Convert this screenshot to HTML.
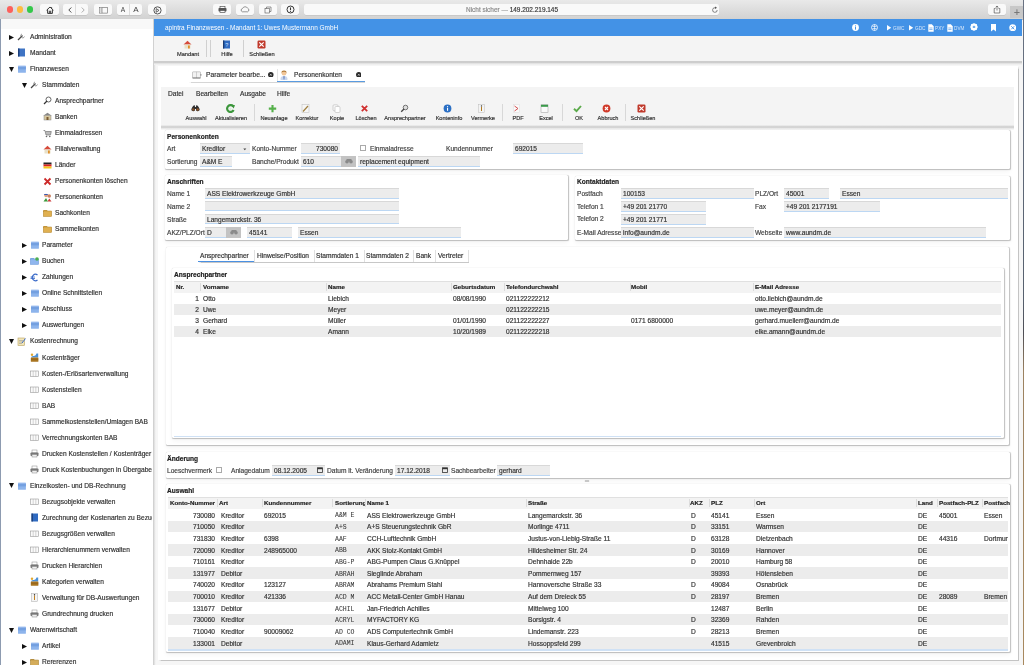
<!DOCTYPE html><html><head><meta charset="utf-8"><style>
html,body{margin:0;padding:0;width:1024px;height:665px;overflow:hidden;background:#f6f6f6;font-family:"Liberation Sans",sans-serif;}
.t{will-change:transform;-webkit-text-stroke:0.18px currentColor;}
.t{position:absolute;white-space:nowrap;line-height:10px;height:10px;}
</style></head><body>
<div style="position:absolute;left:0px;top:0px;width:1024px;height:19px;background:linear-gradient(#e9e9e9,#d2d2d2);"></div>
<div style="position:absolute;left:0px;top:18.5px;width:1024px;height:0.5px;background:#b9b9b9;"></div>
<div style="position:absolute;left:6.6000000000000005px;top:6.2px;width:6.4px;height:6.4px;border-radius:50%;background:#fc605c;"></div>
<div style="position:absolute;left:16.900000000000002px;top:6.2px;width:6.4px;height:6.4px;border-radius:50%;background:#fdbc40;"></div>
<div style="position:absolute;left:27.1px;top:6.2px;width:6.4px;height:6.4px;border-radius:50%;background:#34c84a;"></div>
<div style="position:absolute;left:40px;top:4.3px;width:18.6px;height:10.3px;background:#f9f9f9;border-radius:2px;box-shadow:0 0.5px 0.5px rgba(0,0,0,0.15);"></div>
<div style="position:absolute;left:62.9px;top:4.3px;width:25.4px;height:10.3px;background:#f9f9f9;border-radius:2px;box-shadow:0 0.5px 0.5px rgba(0,0,0,0.15);"></div>
<div style="position:absolute;left:93.75px;top:4.3px;width:17.950000000000003px;height:10.3px;background:#f9f9f9;border-radius:2px;box-shadow:0 0.5px 0.5px rgba(0,0,0,0.15);"></div>
<div style="position:absolute;left:116.8px;top:4.3px;width:25.39999999999999px;height:10.3px;background:#f9f9f9;border-radius:2px;box-shadow:0 0.5px 0.5px rgba(0,0,0,0.15);"></div>
<div style="position:absolute;left:147.5px;top:4.3px;width:18.099999999999994px;height:10.3px;background:#f9f9f9;border-radius:2px;box-shadow:0 0.5px 0.5px rgba(0,0,0,0.15);"></div>
<div style="position:absolute;left:212.9px;top:4.3px;width:18.099999999999994px;height:10.3px;background:#f9f9f9;border-radius:2px;box-shadow:0 0.5px 0.5px rgba(0,0,0,0.15);"></div>
<div style="position:absolute;left:236px;top:4.3px;width:18px;height:10.3px;background:#f9f9f9;border-radius:2px;box-shadow:0 0.5px 0.5px rgba(0,0,0,0.15);"></div>
<div style="position:absolute;left:258.8px;top:4.3px;width:18.19999999999999px;height:10.3px;background:#f9f9f9;border-radius:2px;box-shadow:0 0.5px 0.5px rgba(0,0,0,0.15);"></div>
<div style="position:absolute;left:281.3px;top:4.3px;width:18.099999999999966px;height:10.3px;background:#f9f9f9;border-radius:2px;box-shadow:0 0.5px 0.5px rgba(0,0,0,0.15);"></div>
<div style="position:absolute;left:988px;top:4.3px;width:18px;height:10.3px;background:#f9f9f9;border-radius:2px;box-shadow:0 0.5px 0.5px rgba(0,0,0,0.15);"></div>
<div style="position:absolute;left:75.4px;top:4.3px;width:0.3999999999999915px;height:10.3px;background:#dcdcdc;"></div>
<div style="position:absolute;left:129.3px;top:4.3px;width:0.39999999999997726px;height:10.3px;background:#dcdcdc;"></div>
<div style="position:absolute;left:304.3px;top:4.3px;width:414.8px;height:10.3px;background:#f9f9f9;border-radius:2px;box-shadow:0 0.5px 0.5px rgba(0,0,0,0.12);"></div>
<div class="t" style="left:361.9px;width:300px;text-align:center;top:5px;font-size:6.45px;color:#8a8a8a;">Nicht sicher — <span style="color:#3a3a3a">149.202.219.145</span></div>
<div style="position:absolute;left:1009.5px;top:5.9px;width:14.5px;height:12.6px;background:#c8c8c8;"></div>
<div class="t" style="left:866.5px;width:300px;text-align:center;top:7.85px;font-size:10px;color:#777;">+</div>
<svg style="position:absolute;left:45.5px;top:5.8px" width="8" height="8" viewBox="0 0 8 8"><path d="M0.6 4.2 L4 1 L7.4 4.2 M1.6 3.4 V7.4 H6.4 V3.4 M3.3 7.4 V5.2 H4.7 V7.4 M5.6 1.2 V2.6" fill="none" stroke="#3a3a3a" stroke-width="1"/></svg>
<svg style="position:absolute;left:66.5px;top:5.5px" width="6" height="8" viewBox="0 0 6 8"><path d="M4.3 1.5 L1.8 4 L4.3 6.5" fill="none" stroke="#3a3a3a" stroke-width="0.9"/></svg>
<svg style="position:absolute;left:79.5px;top:5.5px" width="6" height="8" viewBox="0 0 6 8"><path d="M1.7 1.5 L4.2 4 L1.7 6.5" fill="none" stroke="#9a9a9a" stroke-width="0.8"/></svg>
<svg style="position:absolute;left:98.5px;top:6.5px" width="9" height="7" viewBox="0 0 9 7"><rect x="0.5" y="0.5" width="8" height="5.6" fill="none" stroke="#666" stroke-width="0.6"/><rect x="0.8" y="0.8" width="2.2" height="5" fill="#ddd"/><path d="M3 0.5 V6.1" stroke="#666" stroke-width="0.6"/></svg>
<div class="t" style="left:-26.700000000000003px;width:300px;text-align:center;top:5.45px;font-size:6.6px;color:#444;-webkit-text-stroke:0;">A</div>
<div class="t" style="left:-14.400000000000006px;width:300px;text-align:center;top:5.15px;font-size:8px;color:#444;-webkit-text-stroke:0;">A</div>
<svg style="position:absolute;left:152.7px;top:5.6px" width="9" height="9" viewBox="0 0 9 9"><circle cx="4.5" cy="4.4" r="3.6" fill="none" stroke="#444" stroke-width="0.9"/><path d="M3.2 2.6 L6 4.4 L3.2 6.2 Z" fill="none" stroke="#444" stroke-width="0.8"/></svg>
<svg style="position:absolute;left:217.5px;top:5.8px" width="9" height="7" viewBox="0 0 9 7"><rect x="0.5" y="2" width="8" height="3.5" rx="0.8" fill="#555"/><rect x="2" y="0.5" width="5" height="2" fill="none" stroke="#555" stroke-width="0.7"/><rect x="2" y="4.5" width="5" height="2" fill="#f9f9f9" stroke="#555" stroke-width="0.7"/></svg>
<svg style="position:absolute;left:239.8px;top:5.3px" width="10" height="8" viewBox="0 0 10 8"><path d="M2.2 6.8 H7.8 A2 2 0 0 0 7.6 3.2 A2.8 2.8 0 0 0 2.6 3.4 A1.8 1.8 0 0 0 2.2 6.8 Z" fill="none" stroke="#555" stroke-width="0.6"/></svg>
<svg style="position:absolute;left:264px;top:5.5px" width="8" height="8" viewBox="0 0 8 8"><rect x="1" y="2.5" width="4.5" height="4.5" fill="none" stroke="#555" stroke-width="0.6"/><path d="M2.5 2.5 V1 H7 V5.5 H5.5" fill="none" stroke="#555" stroke-width="0.6"/></svg>
<svg style="position:absolute;left:285.8px;top:5.3px" width="9" height="9" viewBox="0 0 9 9"><circle cx="4.5" cy="4.5" r="3.5" fill="none" stroke="#333" stroke-width="1"/><path d="M4.5 2.4 V5.2" stroke="#333" stroke-width="1.1"/><circle cx="4.5" cy="6.5" r="0.6" fill="#333"/></svg>
<svg style="position:absolute;left:711px;top:5.5px" width="8" height="8" viewBox="0 0 8 8"><path d="M6.2 4 A2.3 2.3 0 1 1 4.5 1.8" fill="none" stroke="#555" stroke-width="0.7"/><path d="M4 0.6 L6 1.8 L4 3 Z" fill="#555"/></svg>
<svg style="position:absolute;left:993px;top:4.8px" width="8" height="9" viewBox="0 0 8 9"><path d="M2.5 3.5 H1.2 V8 H6.8 V3.5 H5.5 M4 5.5 V1 M2.6 2.3 L4 1 L5.4 2.3" fill="none" stroke="#555" stroke-width="0.7"/></svg>
<div style="position:absolute;left:0px;top:19px;width:153px;height:646px;background:#ffffff;"></div>
<div style="position:absolute;left:1px;top:19px;width:152px;height:10px;background:#f8f8f8;"></div>
<div style="position:absolute;left:0px;top:19px;width:1.2px;height:646px;background:#8d9bb0;"></div>
<div style="position:absolute;left:152.5px;top:19px;width:3.5px;height:646px;background:linear-gradient(90deg,#cbcbcb,#d6d6d6 30%,#ececec 65%,#f6f6f6);"></div>
<div style="position:absolute;left:0;top:19px;width:152px;height:646px;overflow:hidden;">
<svg style="position:absolute;left:8.5px;top:15.550000000000002px" width="5" height="5" viewBox="0 0 5 5"><path d="M0 0 L5 2.5 L0 5 Z" fill="#111"/></svg>
<svg style="position:absolute;left:17.0px;top:13.350000000000001px" width="9" height="9" viewBox="0 0 9 9"><path d="M1 8 L5.5 3.5" stroke="#444" stroke-width="1.3"/><path d="M5 2 A2 2 0 1 0 7.5 4.5" fill="none" stroke="#999" stroke-width="1"/></svg>
<div class="t" style="left:29.6px;top:13.00px;font-size:6.6px;color:#333;">Administration</div>
<svg style="position:absolute;left:8.5px;top:31.576px" width="5" height="5" viewBox="0 0 5 5"><path d="M0 0 L5 2.5 L0 5 Z" fill="#111"/></svg>
<svg style="position:absolute;left:17.0px;top:29.375999999999998px" width="9" height="9" viewBox="0 0 9 9"><rect x="1" y="0.5" width="7" height="8" fill="#3f74c4"/><rect x="1" y="0.5" width="1.5" height="8" fill="#1d3f7a"/></svg>
<div class="t" style="left:29.6px;top:29.03px;font-size:6.6px;color:#333;">Mandant</div>
<svg style="position:absolute;left:8.5px;top:47.60200000000001px" width="5" height="5" viewBox="0 0 5 5"><path d="M0 0 H5 L2.5 5 Z" fill="#111"/></svg>
<svg style="position:absolute;left:17.0px;top:45.90200000000001px" width="9" height="8" viewBox="0 0 9 8"><rect x="1" y="0.8" width="7.9" height="7" rx="0.5" fill="#8db4ec"/><rect x="1" y="1.4" width="7.9" height="3" fill="#74a0e0"/><rect x="1" y="0.8" width="7.9" height="0.7" fill="#a8c6f2"/></svg>
<div class="t" style="left:29.6px;top:45.05px;font-size:6.6px;color:#333;">Finanzwesen</div>
<svg style="position:absolute;left:21.7px;top:63.62800000000001px" width="5" height="5" viewBox="0 0 5 5"><path d="M0 0 H5 L2.5 5 Z" fill="#111"/></svg>
<svg style="position:absolute;left:29.8px;top:61.42800000000001px" width="9" height="9" viewBox="0 0 9 9"><path d="M1 8 L5.5 3.5" stroke="#444" stroke-width="1.3"/><path d="M5 2 A2 2 0 1 0 7.5 4.5" fill="none" stroke="#999" stroke-width="1"/></svg>
<div class="t" style="left:42.45px;top:61.08px;font-size:6.6px;color:#333;">Stammdaten</div>
<svg style="position:absolute;left:42.6px;top:77.45400000000001px" width="9" height="9" viewBox="0 0 9 9"><circle cx="5.5" cy="3.5" r="2.5" fill="none" stroke="#666" stroke-width="1"/><path d="M4 5 L1 8" stroke="#333" stroke-width="1.2"/></svg>
<div class="t" style="left:55.3px;top:77.10px;font-size:6.6px;color:#333;">Ansprechpartner</div>
<svg style="position:absolute;left:42.6px;top:93.48px" width="9" height="9" viewBox="0 0 9 9"><path d="M0.5 3.5 L4.5 0.8 L8.5 3.5 Z" fill="#888"/><rect x="1" y="3.5" width="7" height="4.5" fill="#d6c7a0" stroke="#888" stroke-width="0.5"/><rect x="3.5" y="5" width="2" height="3" fill="#7a5a30"/></svg>
<div class="t" style="left:55.3px;top:93.13px;font-size:6.6px;color:#333;">Banken</div>
<svg style="position:absolute;left:42.6px;top:109.506px" width="9" height="9" viewBox="0 0 9 9"><path d="M0.5 1.5 H2 L3 6 H7.5 L8.3 2.5 H2.5" fill="#bbb" stroke="#777" stroke-width="0.7"/><circle cx="3.5" cy="7.5" r="0.8" fill="#666"/><circle cx="6.8" cy="7.5" r="0.8" fill="#666"/></svg>
<div class="t" style="left:55.3px;top:109.16px;font-size:6.6px;color:#333;">Einmaladressen</div>
<svg style="position:absolute;left:42.6px;top:125.53200000000001px" width="9" height="9" viewBox="0 0 9 9"><path d="M0.5 4.5 L4.5 0.8 L8.5 4.5 Z" fill="#d64a3a"/><rect x="1.5" y="4.5" width="6" height="4" fill="#e8e0c8"/><rect x="5" y="5.5" width="1.8" height="3" fill="#e0902a"/></svg>
<div class="t" style="left:55.3px;top:125.18px;font-size:6.6px;color:#333;">Filialverwaltung</div>
<svg style="position:absolute;left:42.6px;top:141.55800000000002px" width="9" height="9" viewBox="0 0 9 9"><rect x="0.5" y="1.5" width="8" height="2" fill="#222"/><rect x="0.5" y="3.5" width="8" height="2" fill="#d22"/><rect x="0.5" y="5.5" width="8" height="2" fill="#f5c518"/></svg>
<div class="t" style="left:55.3px;top:141.21px;font-size:6.6px;color:#333;">Länder</div>
<svg style="position:absolute;left:42.6px;top:157.58400000000003px" width="9" height="9" viewBox="0 0 9 9"><path d="M1.5 1.5 L7.5 7.5 M7.5 1.5 L1.5 7.5" stroke="#cc2a2a" stroke-width="1.8"/></svg>
<div class="t" style="left:55.3px;top:157.23px;font-size:6.6px;color:#333;">Personenkonten löschen</div>
<svg style="position:absolute;left:42.6px;top:173.60999999999999px" width="9" height="9" viewBox="0 0 9 9"><circle cx="3" cy="2.5" r="1.8" fill="#e0a080"/><path d="M1.2 1.5 H4.8" stroke="#3a5ab0" stroke-width="1"/><circle cx="6.2" cy="3" r="1.8" fill="#c88060"/><path d="M0.5 8.5 L3 5 L5 8.5 Z" fill="#3a9a3a"/><path d="M4.5 8.5 L6.3 5.5 L8.5 8.5 Z" fill="#cc3a3a"/></svg>
<div class="t" style="left:55.3px;top:173.26px;font-size:6.6px;color:#333;">Personenkonten</div>
<svg style="position:absolute;left:42.6px;top:190.136px" width="9" height="8" viewBox="0 0 9 8"><rect x="0.3" y="1" width="4" height="2" fill="#c89a40"/><rect x="0.3" y="2" width="8.4" height="5.5" fill="#e0b050" stroke="#b0822a" stroke-width="0.5"/></svg>
<div class="t" style="left:55.3px;top:189.29px;font-size:6.6px;color:#333;">Sachkonten</div>
<svg style="position:absolute;left:42.6px;top:206.162px" width="9" height="8" viewBox="0 0 9 8"><rect x="0.3" y="1" width="4" height="2" fill="#c89a40"/><rect x="0.3" y="2" width="8.4" height="5.5" fill="#e0b050" stroke="#b0822a" stroke-width="0.5"/></svg>
<div class="t" style="left:55.3px;top:205.31px;font-size:6.6px;color:#333;">Sammelkonten</div>
<svg style="position:absolute;left:21.7px;top:223.888px" width="5" height="5" viewBox="0 0 5 5"><path d="M0 0 L5 2.5 L0 5 Z" fill="#111"/></svg>
<svg style="position:absolute;left:29.8px;top:222.18800000000002px" width="9" height="8" viewBox="0 0 9 8"><rect x="1" y="0.8" width="7.9" height="7" rx="0.5" fill="#8db4ec"/><rect x="1" y="1.4" width="7.9" height="3" fill="#74a0e0"/><rect x="1" y="0.8" width="7.9" height="0.7" fill="#a8c6f2"/></svg>
<div class="t" style="left:42.45px;top:221.34px;font-size:6.6px;color:#333;">Parameter</div>
<svg style="position:absolute;left:21.7px;top:239.91400000000002px" width="5" height="5" viewBox="0 0 5 5"><path d="M0 0 L5 2.5 L0 5 Z" fill="#111"/></svg>
<svg style="position:absolute;left:29.8px;top:238.21400000000003px" width="9" height="8" viewBox="0 0 9 8"><rect x="0.3" y="1" width="4" height="2" fill="#7ea8e6"/><rect x="0.3" y="2" width="8.4" height="5.5" fill="#8fb6ee" stroke="#6c98d8" stroke-width="0.5"/><circle cx="7" cy="2" r="1.8" fill="#4caf50"/></svg>
<div class="t" style="left:42.45px;top:237.36px;font-size:6.6px;color:#333;">Buchen</div>
<svg style="position:absolute;left:21.7px;top:255.93999999999997px" width="5" height="5" viewBox="0 0 5 5"><path d="M0 0 L5 2.5 L0 5 Z" fill="#111"/></svg>
<svg style="position:absolute;left:29.8px;top:253.73999999999995px" width="9" height="9" viewBox="0 0 9 9"><path d="M7.5 2 A3.2 3.2 0 1 0 7.5 7" fill="none" stroke="#3a6ac8" stroke-width="1.3"/><path d="M0.5 4 H5 M0.5 5.5 H5" stroke="#3a6ac8" stroke-width="0.8"/></svg>
<div class="t" style="left:42.45px;top:253.39px;font-size:6.6px;color:#333;">Zahlungen</div>
<svg style="position:absolute;left:21.7px;top:271.966px" width="5" height="5" viewBox="0 0 5 5"><path d="M0 0 L5 2.5 L0 5 Z" fill="#111"/></svg>
<svg style="position:absolute;left:29.8px;top:270.26599999999996px" width="9" height="8" viewBox="0 0 9 8"><rect x="1" y="0.8" width="7.9" height="7" rx="0.5" fill="#8db4ec"/><rect x="1" y="1.4" width="7.9" height="3" fill="#74a0e0"/><rect x="1" y="0.8" width="7.9" height="0.7" fill="#a8c6f2"/></svg>
<div class="t" style="left:42.45px;top:269.42px;font-size:6.6px;color:#333;">Online Schnittstellen</div>
<svg style="position:absolute;left:21.7px;top:287.992px" width="5" height="5" viewBox="0 0 5 5"><path d="M0 0 L5 2.5 L0 5 Z" fill="#111"/></svg>
<svg style="position:absolute;left:29.8px;top:286.292px" width="9" height="8" viewBox="0 0 9 8"><rect x="1" y="0.8" width="7.9" height="7" rx="0.5" fill="#8db4ec"/><rect x="1" y="1.4" width="7.9" height="3" fill="#74a0e0"/><rect x="1" y="0.8" width="7.9" height="0.7" fill="#a8c6f2"/></svg>
<div class="t" style="left:42.45px;top:285.44px;font-size:6.6px;color:#333;">Abschluss</div>
<svg style="position:absolute;left:21.7px;top:304.01800000000003px" width="5" height="5" viewBox="0 0 5 5"><path d="M0 0 L5 2.5 L0 5 Z" fill="#111"/></svg>
<svg style="position:absolute;left:29.8px;top:302.318px" width="9" height="8" viewBox="0 0 9 8"><rect x="1" y="0.8" width="7.9" height="7" rx="0.5" fill="#8db4ec"/><rect x="1" y="1.4" width="7.9" height="3" fill="#74a0e0"/><rect x="1" y="0.8" width="7.9" height="0.7" fill="#a8c6f2"/></svg>
<div class="t" style="left:42.45px;top:301.47px;font-size:6.6px;color:#333;">Auswertungen</div>
<svg style="position:absolute;left:8.5px;top:320.044px" width="5" height="5" viewBox="0 0 5 5"><path d="M0 0 H5 L2.5 5 Z" fill="#111"/></svg>
<svg style="position:absolute;left:17.0px;top:317.84399999999994px" width="9" height="9" viewBox="0 0 9 9"><rect x="1" y="1" width="6.5" height="7.5" fill="#f2e6b8" stroke="#b8a060" stroke-width="0.6"/><path d="M2 3.5 H6 M2 5 H6 M2 6.5 H5" stroke="#8a8a8a" stroke-width="0.5"/><path d="M5 6 L8.5 1.5" stroke="#3a6ac8" stroke-width="1"/></svg>
<div class="t" style="left:29.6px;top:317.49px;font-size:6.6px;color:#333;">Kostenrechnung</div>
<svg style="position:absolute;left:29.8px;top:333.86999999999995px" width="9" height="9" viewBox="0 0 9 9"><path d="M1 4.5 Q1.5 2.5 4 3 Q6 2.5 6.5 0.5 H8.2 V4.5 Z" fill="#4a90d8"/><circle cx="2" cy="1.8" r="1.2" fill="#e0a830"/><rect x="0.8" y="4.4" width="7.6" height="4.3" rx="0.5" fill="#a87420"/><path d="M1 6.3 H8.2" stroke="#8a5a18" stroke-width="0.6"/></svg>
<div class="t" style="left:42.45px;top:333.52px;font-size:6.6px;color:#333;">Kostenträger</div>
<svg style="position:absolute;left:29.8px;top:349.89599999999996px" width="9" height="9" viewBox="0 0 9 9"><rect x="0.5" y="2" width="8" height="5.5" fill="#fafafa" stroke="#999" stroke-width="0.6"/><path d="M3.2 2 V7.5 M5.8 2 V7.5" stroke="#aaa" stroke-width="0.5"/></svg>
<div class="t" style="left:42.45px;top:349.55px;font-size:6.6px;color:#333;">Kosten-/Erlösartenverwaltung</div>
<svg style="position:absolute;left:29.8px;top:365.92199999999997px" width="9" height="9" viewBox="0 0 9 9"><rect x="0.5" y="2" width="8" height="5.5" fill="#fafafa" stroke="#999" stroke-width="0.6"/><path d="M3.2 2 V7.5 M5.8 2 V7.5" stroke="#aaa" stroke-width="0.5"/></svg>
<div class="t" style="left:42.45px;top:365.57px;font-size:6.6px;color:#333;">Kostenstellen</div>
<svg style="position:absolute;left:29.8px;top:381.948px" width="9" height="9" viewBox="0 0 9 9"><rect x="0.5" y="2" width="8" height="5.5" fill="#fafafa" stroke="#999" stroke-width="0.6"/><path d="M3.2 2 V7.5 M5.8 2 V7.5" stroke="#aaa" stroke-width="0.5"/></svg>
<div class="t" style="left:42.45px;top:381.60px;font-size:6.6px;color:#333;">BAB</div>
<svg style="position:absolute;left:29.8px;top:397.974px" width="9" height="9" viewBox="0 0 9 9"><rect x="0.5" y="2" width="8" height="5.5" fill="#fafafa" stroke="#999" stroke-width="0.6"/><path d="M3.2 2 V7.5 M5.8 2 V7.5" stroke="#aaa" stroke-width="0.5"/></svg>
<div class="t" style="left:42.45px;top:397.62px;font-size:6.6px;color:#333;">Sammelkostenstellen/Umlagen BAB</div>
<svg style="position:absolute;left:29.8px;top:413.99999999999994px" width="9" height="9" viewBox="0 0 9 9"><rect x="0.5" y="2" width="8" height="5.5" fill="#fafafa" stroke="#999" stroke-width="0.6"/><path d="M3.2 2 V7.5 M5.8 2 V7.5" stroke="#aaa" stroke-width="0.5"/></svg>
<div class="t" style="left:42.45px;top:413.65px;font-size:6.6px;color:#333;">Verrechnungskonten BAB</div>
<svg style="position:absolute;left:29.8px;top:430.02599999999995px" width="9" height="9" viewBox="0 0 9 9"><rect x="2" y="1" width="5" height="3" fill="#fff" stroke="#888" stroke-width="0.5"/><rect x="0.5" y="3.5" width="8" height="3.5" rx="0.8" fill="#777"/><rect x="2" y="5.5" width="5" height="2.5" fill="#eee" stroke="#888" stroke-width="0.5"/></svg>
<div class="t" style="left:42.45px;top:429.68px;font-size:6.6px;color:#333;">Drucken Kostenstellen / Kostenträger</div>
<svg style="position:absolute;left:29.8px;top:446.05199999999996px" width="9" height="9" viewBox="0 0 9 9"><rect x="2" y="1" width="5" height="3" fill="#fff" stroke="#888" stroke-width="0.5"/><rect x="0.5" y="3.5" width="8" height="3.5" rx="0.8" fill="#777"/><rect x="2" y="5.5" width="5" height="2.5" fill="#eee" stroke="#888" stroke-width="0.5"/></svg>
<div class="t" style="left:42.45px;top:445.70px;font-size:6.6px;color:#333;">Druck Kostenbuchungen in Übergabe</div>
<svg style="position:absolute;left:8.5px;top:464.278px" width="5" height="5" viewBox="0 0 5 5"><path d="M0 0 H5 L2.5 5 Z" fill="#111"/></svg>
<svg style="position:absolute;left:17.0px;top:462.578px" width="9" height="8" viewBox="0 0 9 8"><rect x="1" y="0.8" width="7.9" height="7" rx="0.5" fill="#8db4ec"/><rect x="1" y="1.4" width="7.9" height="3" fill="#74a0e0"/><rect x="1" y="0.8" width="7.9" height="0.7" fill="#a8c6f2"/></svg>
<div class="t" style="left:29.6px;top:461.73px;font-size:6.6px;color:#333;">Einzelkosten- und DB-Rechnung</div>
<svg style="position:absolute;left:29.8px;top:478.104px" width="9" height="9" viewBox="0 0 9 9"><rect x="0.5" y="2" width="8" height="5.5" fill="#fafafa" stroke="#999" stroke-width="0.6"/><path d="M3.2 2 V7.5 M5.8 2 V7.5" stroke="#aaa" stroke-width="0.5"/></svg>
<div class="t" style="left:42.45px;top:477.75px;font-size:6.6px;color:#333;">Bezugsobjekte verwalten</div>
<svg style="position:absolute;left:29.8px;top:494.13px" width="9" height="9" viewBox="0 0 9 9"><rect x="1.5" y="0.5" width="6.5" height="8" fill="#2f6ac0"/><rect x="1.5" y="0.5" width="1.3" height="8" fill="#1a3a70"/></svg>
<div class="t" style="left:42.45px;top:493.78px;font-size:6.6px;color:#333;">Zurechnung der Kostenarten zu Bezugsobjekten</div>
<svg style="position:absolute;left:29.8px;top:510.15599999999995px" width="9" height="9" viewBox="0 0 9 9"><rect x="0.5" y="2" width="8" height="5.5" fill="#fafafa" stroke="#999" stroke-width="0.6"/><path d="M3.2 2 V7.5 M5.8 2 V7.5" stroke="#aaa" stroke-width="0.5"/></svg>
<div class="t" style="left:42.45px;top:509.81px;font-size:6.6px;color:#333;">Bezugsgrößen verwalten</div>
<svg style="position:absolute;left:29.8px;top:526.182px" width="9" height="9" viewBox="0 0 9 9"><rect x="0.5" y="2" width="8" height="5.5" fill="#fafafa" stroke="#999" stroke-width="0.6"/><path d="M3.2 2 V7.5 M5.8 2 V7.5" stroke="#aaa" stroke-width="0.5"/></svg>
<div class="t" style="left:42.45px;top:525.83px;font-size:6.6px;color:#333;">Hierarchienummern verwalten</div>
<svg style="position:absolute;left:29.8px;top:542.208px" width="9" height="9" viewBox="0 0 9 9"><rect x="2" y="1" width="5" height="3" fill="#fff" stroke="#888" stroke-width="0.5"/><rect x="0.5" y="3.5" width="8" height="3.5" rx="0.8" fill="#777"/><rect x="2" y="5.5" width="5" height="2.5" fill="#eee" stroke="#888" stroke-width="0.5"/></svg>
<div class="t" style="left:42.45px;top:541.86px;font-size:6.6px;color:#333;">Drucken Hierarchien</div>
<svg style="position:absolute;left:29.8px;top:558.234px" width="9" height="9" viewBox="0 0 9 9"><path d="M1 4.5 Q1.5 2.5 4 3 Q6 2.5 6.5 0.5 H8.2 V4.5 Z" fill="#4a90d8"/><circle cx="2" cy="1.8" r="1.2" fill="#e0a830"/><rect x="0.8" y="4.4" width="7.6" height="4.3" rx="0.5" fill="#a87420"/><path d="M1 6.3 H8.2" stroke="#8a5a18" stroke-width="0.6"/></svg>
<div class="t" style="left:42.45px;top:557.88px;font-size:6.6px;color:#333;">Kategorien verwalten</div>
<svg style="position:absolute;left:29.8px;top:574.26px" width="9" height="9" viewBox="0 0 9 9"><rect x="1.5" y="0.5" width="6" height="8" fill="#f4f4f4" stroke="#aaa" stroke-width="0.5"/><path d="M4.5 2.5 V7" stroke="#c08020" stroke-width="1"/><circle cx="4.5" cy="1.8" r="0.7" fill="#333"/></svg>
<div class="t" style="left:42.45px;top:573.91px;font-size:6.6px;color:#333;">Verwaltung für DB-Auswertungen</div>
<svg style="position:absolute;left:29.8px;top:590.2860000000001px" width="9" height="9" viewBox="0 0 9 9"><rect x="2" y="1" width="5" height="3" fill="#fff" stroke="#888" stroke-width="0.5"/><rect x="0.5" y="3.5" width="8" height="3.5" rx="0.8" fill="#777"/><rect x="2" y="5.5" width="5" height="2.5" fill="#eee" stroke="#888" stroke-width="0.5"/></svg>
<div class="t" style="left:42.45px;top:589.94px;font-size:6.6px;color:#333;">Grundrechnung drucken</div>
<svg style="position:absolute;left:8.5px;top:608.5120000000001px" width="5" height="5" viewBox="0 0 5 5"><path d="M0 0 H5 L2.5 5 Z" fill="#111"/></svg>
<svg style="position:absolute;left:17.0px;top:606.812px" width="9" height="8" viewBox="0 0 9 8"><rect x="1" y="0.8" width="7.9" height="7" rx="0.5" fill="#8db4ec"/><rect x="1" y="1.4" width="7.9" height="3" fill="#74a0e0"/><rect x="1" y="0.8" width="7.9" height="0.7" fill="#a8c6f2"/></svg>
<div class="t" style="left:29.6px;top:605.96px;font-size:6.6px;color:#333;">Warenwirtschaft</div>
<svg style="position:absolute;left:21.7px;top:624.538px" width="5" height="5" viewBox="0 0 5 5"><path d="M0 0 L5 2.5 L0 5 Z" fill="#111"/></svg>
<svg style="position:absolute;left:29.8px;top:622.838px" width="9" height="8" viewBox="0 0 9 8"><rect x="1" y="0.8" width="7.9" height="7" rx="0.5" fill="#8db4ec"/><rect x="1" y="1.4" width="7.9" height="3" fill="#74a0e0"/><rect x="1" y="0.8" width="7.9" height="0.7" fill="#a8c6f2"/></svg>
<div class="t" style="left:42.45px;top:621.99px;font-size:6.6px;color:#333;">Artikel</div>
<svg style="position:absolute;left:21.7px;top:640.5640000000001px" width="5" height="5" viewBox="0 0 5 5"><path d="M0 0 L5 2.5 L0 5 Z" fill="#111"/></svg>
<svg style="position:absolute;left:29.8px;top:638.864px" width="9" height="8" viewBox="0 0 9 8"><rect x="0.3" y="1" width="4" height="2" fill="#b89040"/><rect x="0.3" y="2" width="8.4" height="5.5" fill="#d4ac5a" stroke="#a8843a" stroke-width="0.5"/></svg>
<div class="t" style="left:42.45px;top:638.01px;font-size:6.6px;color:#333;">Rererenzen</div>
</div>
<div style="position:absolute;left:153.5px;top:19px;width:868.5px;height:17px;background:#4392e6;"></div>
<div class="t" style="left:164.6px;top:23.15px;font-size:6.45px;color:#ffffff;-webkit-text-stroke:0;">apintra Finanzwesen - Mandant 1: Uwes Mustermann GmbH</div>
<div style="position:absolute;left:153.5px;top:36px;width:868.5px;height:25px;background:#f4f4f4;"></div>
<div style="position:absolute;left:1022.5px;top:0px;width:1.5px;height:665px;background:linear-gradient(#6a7383,#56606e 45%,#4e4e55 50%,#9c8260 56%,#a8895e);"></div>
<svg style="position:absolute;left:851.8px;top:23.8px" width="7" height="7" viewBox="0 0 7 7"><circle cx="3.5" cy="3.5" r="3.4" fill="#ffffff"/><rect x="3" y="3" width="1" height="2.6" fill="#4392e6"/><circle cx="3.5" cy="1.9" r="0.55" fill="#4392e6"/></svg>
<svg style="position:absolute;left:870.6px;top:23.8px" width="7" height="7" viewBox="0 0 7 7"><circle cx="3.5" cy="3.5" r="3" fill="none" stroke="#ffffff" stroke-width="0.8"/><path d="M1.5 2.5 H5.5 M1.5 4.5 H5.5 M3.5 0.5 V6.5" stroke="#ffffff" stroke-width="0.6"/></svg>
<svg style="position:absolute;left:887px;top:24.5px" width="5" height="6" viewBox="0 0 5 6"><path d="M0 0 L4.2 2.8 L0 5.6 Z" fill="#ffffff"/></svg>
<div class="t" style="left:893px;top:23.55px;font-size:4.7px;color:#d6e6fa;-webkit-text-stroke:0;">GWC</div>
<svg style="position:absolute;left:908.8px;top:24.5px" width="5" height="6" viewBox="0 0 5 6"><path d="M0 0 L4.2 2.8 L0 5.6 Z" fill="#ffffff"/></svg>
<div class="t" style="left:914.6px;top:23.55px;font-size:4.7px;color:#d6e6fa;-webkit-text-stroke:0;">GDC</div>
<svg style="position:absolute;left:928px;top:23.5px" width="6" height="8" viewBox="0 0 6 8"><path d="M0.3 0.3 H3.8 L5.7 2.2 V7.7 H0.3 Z" fill="#ffffff"/><path d="M1.3 4 H4.5 M1.3 5.5 H4.5" stroke="#4392e6" stroke-width="0.6"/></svg>
<div class="t" style="left:935px;top:23.55px;font-size:4.7px;color:#d6e6fa;-webkit-text-stroke:0;">PXY</div>
<svg style="position:absolute;left:947px;top:23.5px" width="6" height="8" viewBox="0 0 6 8"><path d="M0.3 0.3 H3.8 L5.7 2.2 V7.7 H0.3 Z" fill="#ffffff"/><path d="M1.3 4 H4.5 M1.3 5.5 H4.5" stroke="#4392e6" stroke-width="0.6"/></svg>
<div class="t" style="left:953.7px;top:23.55px;font-size:4.7px;color:#d6e6fa;-webkit-text-stroke:0;">DVM</div>
<svg style="position:absolute;left:970.4px;top:23.3px" width="8" height="8" viewBox="0 0 8 8"><circle cx="4" cy="4" r="2.6" fill="none" stroke="#ffffff" stroke-width="1.6"/><path d="M4 0.2 V7.8 M0.2 4 H7.8 M1.3 1.3 L6.7 6.7 M6.7 1.3 L1.3 6.7" stroke="#ffffff" stroke-width="1.1"/><circle cx="4" cy="4" r="1" fill="#4392e6"/></svg>
<svg style="position:absolute;left:990.6px;top:23.5px" width="5" height="8" viewBox="0 0 5 8"><path d="M0 0 H5 V7.5 L2.5 5.5 L0 7.5 Z" fill="#ffffff"/></svg>
<svg style="position:absolute;left:1008.9px;top:23.7px" width="7.5" height="7.5" viewBox="0 0 7.5 7.5"><circle cx="3.75" cy="3.75" r="3.5" fill="#ffffff"/><path d="M2.2 2.2 L5.3 5.3 M5.3 2.2 L2.2 5.3" stroke="#4392e6" stroke-width="0.9"/></svg>
<svg style="position:absolute;left:182.5px;top:39.8px" width="9" height="9" viewBox="0 0 9 9"><path d="M0.5 4.5 L4.5 0.8 L8.5 4.5 Z" fill="#d64a3a"/><rect x="1.5" y="4.5" width="6" height="4" fill="#e8e0c8"/><rect x="5" y="5.5" width="1.8" height="3" fill="#e0902a"/></svg>
<div class="t" style="left:38px;width:300px;text-align:center;top:48.95px;font-size:5.7px;color:#333;">Mandant</div>
<div style="position:absolute;left:205.5px;top:40px;width:0.5px;height:16.700000000000003px;background:#d0d0d0;"></div>
<div style="position:absolute;left:210.1px;top:40px;width:0.5px;height:16.700000000000003px;background:#d0d0d0;"></div>
<svg style="position:absolute;left:222px;top:39.8px" width="9" height="9" viewBox="0 0 9 9"><rect x="1" y="0.5" width="7" height="8" fill="#2f6ac0"/><rect x="1" y="0.5" width="1.3" height="8" fill="#1a3a70"/><text x="4.8" y="6.5" font-size="5.5" fill="#cfe0ff" text-anchor="middle" font-family="Liberation Sans">?</text></svg>
<div class="t" style="left:76.5px;width:300px;text-align:center;top:48.95px;font-size:5.7px;color:#333;">Hilfe</div>
<div style="position:absolute;left:243px;top:40px;width:0.5px;height:16.700000000000003px;background:#d0d0d0;"></div>
<svg style="position:absolute;left:257px;top:39.8px" width="9" height="9" viewBox="0 0 9 9"><rect x="0.5" y="0.5" width="8" height="8" rx="1.2" fill="#c0392b"/><path d="M2.3 2.3 L6.7 6.7 M6.7 2.3 L2.3 6.7" stroke="#fff" stroke-width="1.2"/></svg>
<div class="t" style="left:111.5px;width:300px;text-align:center;top:48.95px;font-size:5.7px;color:#333;">Schließen</div>
<div style="position:absolute;left:158px;top:65.8px;width:860px;height:594.7px;background:#ffffff;box-shadow:0.5px 0.8px 1px rgba(0,0,0,0.2);"></div>
<div style="position:absolute;left:153.5px;top:60.6px;width:868.5px;height:4.399999999999999px;background:linear-gradient(#d8d8d8,#c2c2c2 25%,#e2e2e2 60%,#f6f6f6);"></div>
<div style="position:absolute;left:189.4px;top:68.8px;width:175.20000000000002px;height:13.5px;background:#fff;box-shadow:0.3px 0.5px 0.8px rgba(0,0,0,0.16);"></div>
<div style="position:absolute;left:276.6px;top:68.8px;width:0.39999999999997726px;height:13.200000000000003px;background:#e4e4e4;"></div>
<div style="position:absolute;left:277px;top:81px;width:87.60000000000002px;height:1px;background:#5a9be0;"></div>
<svg style="position:absolute;left:191.5px;top:70.5px" width="10" height="8" viewBox="0 0 10 8"><rect x="0.5" y="0.8" width="8" height="6.2" rx="0.6" fill="#f2f2f2" stroke="#9a9a9a" stroke-width="0.5"/><path d="M4.5 0.8 V7" stroke="#aaa" stroke-width="0.5"/><path d="M0.5 7 H8.5" stroke="#555" stroke-width="0.7"/><path d="M8.6 3 L9.8 3.9 L8.6 4.8 Z" fill="#555"/></svg>
<div class="t" style="left:205.8px;top:70.35px;font-size:6.7px;color:#333;">Parameter bearbe...</div>
<svg style="position:absolute;left:268.4px;top:71.8px" width="5.6" height="5.6" viewBox="0 0 5.6 5.6"><circle cx="2.8" cy="2.8" r="2.75" fill="#2a2a2a"/><path d="M1.9 1.9 L3.7 3.7 M3.7 1.9 L1.9 3.7" stroke="#fff" stroke-width="0.55"/></svg>
<svg style="position:absolute;left:280.3px;top:69.8px" width="8" height="10" viewBox="0 0 8 10"><circle cx="4" cy="3.2" r="2.4" fill="#f2c79a"/><path d="M1.5 3 Q1.4 0.6 4 0.6 Q6.6 0.6 6.5 3 Q5.5 1.6 4 1.8 Q2.5 1.6 1.5 3 Z" fill="#b07a3a"/><path d="M0.6 10 V8 Q1 6 4 6 Q7 6 7.4 8 V10 Z" fill="#c9d6ee"/><path d="M3.5 6.3 H4.5 L4.3 9.5 H3.7 Z" fill="#3558a8"/></svg>
<div class="t" style="left:293.7px;top:70.35px;font-size:6.6px;color:#333;">Personenkonten</div>
<svg style="position:absolute;left:355.9px;top:71.8px" width="5.6" height="5.6" viewBox="0 0 5.6 5.6"><circle cx="2.8" cy="2.8" r="2.75" fill="#2a2a2a"/><path d="M1.9 1.9 L3.7 3.7 M3.7 1.9 L1.9 3.7" stroke="#fff" stroke-width="0.55"/></svg>
<div style="position:absolute;left:161.3px;top:87px;width:852.5px;height:37.5px;background:#f4f4f4;"></div>
<div style="position:absolute;left:161.3px;top:124.5px;width:852.5px;height:5.5px;background:linear-gradient(#f3f3f3,#cfcfcf 35%,#d4d4d4 50%,#f3f3f3 80%,#f8f8f8);"></div>
<div class="t" style="left:167.8px;top:89.15px;font-size:6.6px;color:#333;">Datei</div>
<div class="t" style="left:195.6px;top:89.15px;font-size:6.6px;color:#333;">Bearbeiten</div>
<div class="t" style="left:240px;top:89.15px;font-size:6.6px;color:#333;">Ausgabe</div>
<div class="t" style="left:277px;top:89.15px;font-size:6.6px;color:#333;">Hilfe</div>
<svg style="position:absolute;left:190.70000000000002px;top:103.9px" width="9" height="9" viewBox="0 0 9 9"><path d="M1.4 3 Q2.3 1 3.8 1.3 L4 3 H5 L5.2 1.3 Q6.7 1 7.6 3 L8.7 5.2 A2.1 2.1 0 0 1 5.1 6.6 L5 5 H4 L3.9 6.6 A2.1 2.1 0 0 1 0.3 5.2 Z" fill="#2e2e2e"/><circle cx="2.3" cy="5.5" r="1.2" fill="#8a5228"/><circle cx="6.7" cy="5.5" r="1.2" fill="#8a5228"/></svg>
<div class="t" style="left:46.400000000000006px;width:300px;text-align:center;top:113.15px;font-size:5.6px;color:#333;">Auswahl</div>
<svg style="position:absolute;left:225.60000000000002px;top:103.9px" width="9" height="9" viewBox="0 0 9 9"><path d="M7.3 2.6 A3.4 3.4 0 1 0 7.6 6" fill="none" stroke="#3b963b" stroke-width="2.2"/><path d="M4.8 0.2 L9 1.2 L7.6 4.6 Z" fill="#3b963b"/><circle cx="4.4" cy="4.8" r="1.1" fill="#d8ecd8"/></svg>
<div class="t" style="left:81.30000000000001px;width:300px;text-align:center;top:113.15px;font-size:5.6px;color:#333;">Aktualisieren</div>
<svg style="position:absolute;left:267.8px;top:103.9px" width="9" height="9" viewBox="0 0 9 9"><path d="M4.5 1 V8.3 M0.8 4.6 H8.2" stroke="#55b04a" stroke-width="2.1"/></svg>
<div class="t" style="left:123.5px;width:300px;text-align:center;top:113.15px;font-size:5.6px;color:#333;">Neuanlage</div>
<svg style="position:absolute;left:301.3px;top:103.9px" width="9" height="9" viewBox="0 0 9 9"><rect x="1" y="0.5" width="7" height="8" fill="#f6f6f6" stroke="#bbb" stroke-width="0.5"/><path d="M2 7.5 L7 2" stroke="#a08040" stroke-width="1.2"/></svg>
<div class="t" style="left:157px;width:300px;text-align:center;top:113.15px;font-size:5.6px;color:#333;">Korrektur</div>
<svg style="position:absolute;left:331.7px;top:103.9px" width="9" height="9" viewBox="0 0 9 9"><rect x="1" y="0.8" width="5" height="6" rx="1" fill="#f8f8f8" stroke="#bbb" stroke-width="0.6"/><rect x="3" y="2.5" width="5" height="6" rx="1" fill="#fff" stroke="#bbb" stroke-width="0.6"/></svg>
<div class="t" style="left:187.39999999999998px;width:300px;text-align:center;top:113.15px;font-size:5.6px;color:#333;">Kopie</div>
<svg style="position:absolute;left:360.1px;top:103.9px" width="9" height="9" viewBox="0 0 9 9"><path d="M1.8 1.8 L7.2 7.2 M7.2 1.8 L1.8 7.2" stroke="#d03030" stroke-width="1.8"/></svg>
<div class="t" style="left:215.8px;width:300px;text-align:center;top:113.15px;font-size:5.6px;color:#333;">Löschen</div>
<svg style="position:absolute;left:399.5px;top:103.9px" width="9" height="9" viewBox="0 0 9 9"><circle cx="5.5" cy="3.5" r="2.3" fill="#ddd" stroke="#666" stroke-width="0.9"/><path d="M4 5 L1.2 7.8" stroke="#444" stroke-width="1.3"/></svg>
<div class="t" style="left:255.2px;width:300px;text-align:center;top:113.15px;font-size:5.6px;color:#333;">Ansprechpartner</div>
<svg style="position:absolute;left:443.1px;top:103.9px" width="9" height="9" viewBox="0 0 9 9"><circle cx="4.5" cy="4.5" r="3.9" fill="#2b6fc4"/><rect x="4" y="3.8" width="1.1" height="3" fill="#fff"/><circle cx="4.55" cy="2.6" r="0.65" fill="#fff"/></svg>
<div class="t" style="left:298.8px;width:300px;text-align:center;top:113.15px;font-size:5.6px;color:#333;">Konteninfo</div>
<svg style="position:absolute;left:476.90000000000003px;top:103.9px" width="9" height="9" viewBox="0 0 9 9"><rect x="1.5" y="0.5" width="6" height="8" fill="#f4f4f4" stroke="#bbb" stroke-width="0.5"/><path d="M4.5 2.8 V7" stroke="#b07a20" stroke-width="1"/><circle cx="4.5" cy="1.9" r="0.7" fill="#333"/></svg>
<div class="t" style="left:332.6px;width:300px;text-align:center;top:113.15px;font-size:5.6px;color:#333;">Vermerke</div>
<svg style="position:absolute;left:511.8px;top:103.9px" width="9" height="9" viewBox="0 0 9 9"><rect x="1.5" y="0.5" width="6" height="8" fill="#fafafa" stroke="#ddd" stroke-width="0.5"/><path d="M2.5 2 L6 4.5 L2.5 7" fill="none" stroke="#d04040" stroke-width="0.9"/></svg>
<div class="t" style="left:367.5px;width:300px;text-align:center;top:113.15px;font-size:5.6px;color:#333;">PDF</div>
<svg style="position:absolute;left:540.3px;top:103.9px" width="9" height="9" viewBox="0 0 9 9"><rect x="1" y="0.8" width="7" height="7.7" fill="#fafafa" stroke="#999" stroke-width="0.5"/><rect x="1" y="0.8" width="7" height="2" fill="#3a9a4a"/></svg>
<div class="t" style="left:396px;width:300px;text-align:center;top:113.15px;font-size:5.6px;color:#333;">Excel</div>
<svg style="position:absolute;left:573.1999999999999px;top:103.9px" width="9" height="9" viewBox="0 0 9 9"><path d="M1 4.8 L3.5 7.2 L8 2" fill="none" stroke="#5aaa4a" stroke-width="1.9"/></svg>
<div class="t" style="left:428.9px;width:300px;text-align:center;top:113.15px;font-size:5.6px;color:#333;">OK</div>
<svg style="position:absolute;left:602.0px;top:103.9px" width="9" height="9" viewBox="0 0 9 9"><circle cx="4.5" cy="4.5" r="3.9" fill="#d03a2a"/><path d="M3 3 L6 6 M6 3 L3 6" stroke="#fff" stroke-width="1.1"/></svg>
<div class="t" style="left:457.70000000000005px;width:300px;text-align:center;top:113.15px;font-size:5.6px;color:#333;">Abbruch</div>
<svg style="position:absolute;left:637.3px;top:103.9px" width="9" height="9" viewBox="0 0 9 9"><rect x="0.5" y="0.5" width="8" height="8" rx="1.2" fill="#c0392b"/><path d="M2.3 2.3 L6.7 6.7 M6.7 2.3 L2.3 6.7" stroke="#fff" stroke-width="1.2"/></svg>
<div class="t" style="left:493px;width:300px;text-align:center;top:113.15px;font-size:5.6px;color:#333;">Schließen</div>
<div style="position:absolute;left:253.95px;top:104.4px;width:0.5px;height:16.599999999999994px;background:#d8d8d8;"></div>
<div style="position:absolute;left:501.55px;top:104.4px;width:0.5px;height:16.599999999999994px;background:#d8d8d8;"></div>
<div style="position:absolute;left:562.25px;top:104.4px;width:0.5px;height:16.599999999999994px;background:#d8d8d8;"></div>
<div style="position:absolute;left:624.75px;top:104.4px;width:0.5px;height:16.599999999999994px;background:#d8d8d8;"></div>
<div style="position:absolute;left:164.8px;top:129.8px;width:845.2px;height:39.19999999999999px;background:#fff;box-shadow:0.4px 0.7px 1px rgba(0,0,0,0.24),0 3px 5px rgba(0,0,0,0.045);border-radius:1.5px;"></div>
<div class="t" style="left:167.2px;top:131.55px;font-size:6.6px;color:#222;font-weight:bold;">Personenkonten</div>
<div class="t" style="left:167.2px;top:143.85px;font-size:6.6px;color:#444;">Art</div>
<div style="position:absolute;left:200px;top:143.1px;width:49.69999999999999px;height:10.599999999999994px;background:#ececec;border-top:0.6px solid #d8d8d8;box-sizing:border-box;"></div>
<div style="position:absolute;left:200px;top:152.79999999999998px;width:49.69999999999999px;height:0.9000000000000057px;background:#bcd7f3;"></div>
<div class="t" style="left:202px;top:143.95px;font-size:6.6px;color:#333;">Kreditor</div>
<svg style="position:absolute;left:243px;top:147.6px" width="4" height="3" viewBox="0 0 4 3"><path d="M0.3 0.5 H3.3 L1.8 2.3 Z" fill="#444"/></svg>
<div class="t" style="left:251.8px;top:143.85px;font-size:6.6px;color:#444;">Konto-Nummer</div>
<div style="position:absolute;left:301.4px;top:143.1px;width:39.0px;height:10.599999999999994px;background:#ececec;border-top:0.6px solid #d8d8d8;box-sizing:border-box;"></div>
<div style="position:absolute;left:301.4px;top:152.79999999999998px;width:39.0px;height:0.9000000000000057px;background:#bcd7f3;"></div>
<div class="t" style="left:37.90px;width:300px;text-align:right;top:143.95px;font-size:6.6px;color:#333;">730080</div>
<div style="position:absolute;left:360px;top:145.2px;width:6.199999999999989px;height:6.200000000000017px;background:#fff;border:0.6px solid #aaa;box-sizing:border-box;"></div>
<div class="t" style="left:369.7px;top:143.85px;font-size:6.6px;color:#444;">Einmaladresse</div>
<div class="t" style="left:446.4px;top:143.85px;font-size:6.6px;color:#444;">Kundennummer</div>
<div style="position:absolute;left:513px;top:143.1px;width:70px;height:10.599999999999994px;background:#ececec;border-top:0.6px solid #d8d8d8;box-sizing:border-box;"></div>
<div style="position:absolute;left:513px;top:152.79999999999998px;width:70px;height:0.9000000000000057px;background:#bcd7f3;"></div>
<div class="t" style="left:515px;top:143.95px;font-size:6.6px;color:#333;">692015</div>
<div class="t" style="left:167.2px;top:156.55px;font-size:6.6px;color:#444;">Sortierung</div>
<div style="position:absolute;left:200px;top:155.9px;width:31.69999999999999px;height:10.799999999999983px;background:#ececec;border-top:0.6px solid #d8d8d8;box-sizing:border-box;"></div>
<div style="position:absolute;left:200px;top:165.79999999999998px;width:31.69999999999999px;height:0.9000000000000057px;background:#bcd7f3;"></div>
<div class="t" style="left:202px;top:156.85px;font-size:6.6px;color:#333;">A&amp;M E</div>
<div class="t" style="left:251.8px;top:156.55px;font-size:6.6px;color:#444;">Banche/Produkt</div>
<div style="position:absolute;left:301.4px;top:155.9px;width:39.80000000000001px;height:10.799999999999983px;background:#ececec;border-top:0.6px solid #d8d8d8;box-sizing:border-box;"></div>
<div style="position:absolute;left:301.4px;top:165.79999999999998px;width:39.80000000000001px;height:0.9000000000000057px;background:#bcd7f3;"></div>
<div class="t" style="left:303.4px;top:156.85px;font-size:6.6px;color:#333;">610</div>
<div style="position:absolute;left:341.2px;top:155.9px;width:14.600000000000023px;height:10.799999999999983px;background:#c3c3c3;"></div>
<svg style="position:absolute;left:344.5px;top:158.3px" width="8" height="6" viewBox="0 0 8 6"><circle cx="2" cy="3.8" r="1.8" fill="#8a8a8a"/><circle cx="6" cy="3.8" r="1.8" fill="#8a8a8a"/><rect x="1.5" y="1" width="5" height="2.5" fill="#8a8a8a"/></svg>
<div style="position:absolute;left:358px;top:155.9px;width:122px;height:10.799999999999983px;background:#ececec;border-top:0.6px solid #d8d8d8;box-sizing:border-box;"></div>
<div style="position:absolute;left:358px;top:165.79999999999998px;width:122px;height:0.9000000000000057px;background:#bcd7f3;"></div>
<div class="t" style="left:360px;top:156.85px;font-size:6.6px;color:#333;">replacement equipment</div>
<div style="position:absolute;left:165.4px;top:174.8px;width:403.0px;height:65.39999999999998px;background:#fff;box-shadow:0.4px 0.7px 1px rgba(0,0,0,0.24),0 3px 5px rgba(0,0,0,0.045);border-radius:1.5px;"></div>
<div class="t" style="left:167.2px;top:177.15px;font-size:6.6px;color:#222;font-weight:bold;">Anschriften</div>
<div class="t" style="left:167.2px;top:189.05px;font-size:6.6px;color:#444;">Name 1</div>
<div style="position:absolute;left:205.1px;top:188.2px;width:193.70000000000002px;height:10.5px;background:#ececec;border-top:0.6px solid #d8d8d8;box-sizing:border-box;"></div>
<div style="position:absolute;left:205.1px;top:197.79999999999998px;width:193.70000000000002px;height:0.9000000000000057px;background:#bcd7f3;"></div>
<div class="t" style="left:207.1px;top:189.00px;font-size:6.6px;color:#333;">ASS Elektrowerkzeuge GmbH</div>
<div class="t" style="left:167.2px;top:201.85px;font-size:6.6px;color:#444;">Name 2</div>
<div style="position:absolute;left:205.1px;top:201.1px;width:193.70000000000002px;height:10.200000000000017px;background:#ececec;border-top:0.6px solid #d8d8d8;box-sizing:border-box;"></div>
<div style="position:absolute;left:205.1px;top:210.4px;width:193.70000000000002px;height:0.9000000000000057px;background:#bcd7f3;"></div>
<div class="t" style="left:167.2px;top:214.65px;font-size:6.6px;color:#444;">Straße</div>
<div style="position:absolute;left:205.1px;top:214px;width:193.70000000000002px;height:10.300000000000011px;background:#ececec;border-top:0.6px solid #d8d8d8;box-sizing:border-box;"></div>
<div style="position:absolute;left:205.1px;top:223.4px;width:193.70000000000002px;height:0.9000000000000057px;background:#bcd7f3;"></div>
<div class="t" style="left:207.1px;top:214.70px;font-size:6.6px;color:#333;">Langemarckstr. 36</div>
<div class="t" style="left:167.2px;top:227.85px;font-size:6.6px;color:#444;">AKZ/PLZ/Ort</div>
<div style="position:absolute;left:205.1px;top:227px;width:21.099999999999994px;height:10.599999999999994px;background:#ececec;border-top:0.6px solid #d8d8d8;box-sizing:border-box;"></div>
<div style="position:absolute;left:205.1px;top:236.7px;width:21.099999999999994px;height:0.9000000000000057px;background:#bcd7f3;"></div>
<div class="t" style="left:207.1px;top:227.85px;font-size:6.6px;color:#333;">D</div>
<div style="position:absolute;left:226.2px;top:227px;width:14.700000000000017px;height:10.599999999999994px;background:#c3c3c3;"></div>
<svg style="position:absolute;left:229.55px;top:229.3px" width="8" height="6" viewBox="0 0 8 6"><circle cx="2" cy="3.8" r="1.8" fill="#8a8a8a"/><circle cx="6" cy="3.8" r="1.8" fill="#8a8a8a"/><rect x="1.5" y="1" width="5" height="2.5" fill="#8a8a8a"/></svg>
<div style="position:absolute;left:247.2px;top:227px;width:44.80000000000001px;height:10.599999999999994px;background:#ececec;border-top:0.6px solid #d8d8d8;box-sizing:border-box;"></div>
<div style="position:absolute;left:247.2px;top:236.7px;width:44.80000000000001px;height:0.9000000000000057px;background:#bcd7f3;"></div>
<div class="t" style="left:249.2px;top:227.85px;font-size:6.6px;color:#333;">45141</div>
<div style="position:absolute;left:298.2px;top:227px;width:162.40000000000003px;height:10.599999999999994px;background:#ececec;border-top:0.6px solid #d8d8d8;box-sizing:border-box;"></div>
<div style="position:absolute;left:298.2px;top:236.7px;width:162.40000000000003px;height:0.9000000000000057px;background:#bcd7f3;"></div>
<div class="t" style="left:300.2px;top:227.85px;font-size:6.6px;color:#333;">Essen</div>
<div style="position:absolute;left:574.8px;top:175.8px;width:435.20000000000005px;height:64.0px;background:#fff;box-shadow:0.4px 0.7px 1px rgba(0,0,0,0.24),0 3px 5px rgba(0,0,0,0.045);border-radius:1.5px;"></div>
<div class="t" style="left:576.6px;top:177.25px;font-size:6.6px;color:#222;font-weight:bold;">Kontaktdaten</div>
<div class="t" style="left:576.6px;top:188.95px;font-size:6.6px;color:#444;">Postfach</div>
<div style="position:absolute;left:621.1px;top:188.2px;width:132.64999999999998px;height:10.700000000000017px;background:#ececec;border-top:0.6px solid #d8d8d8;box-sizing:border-box;"></div>
<div style="position:absolute;left:621.1px;top:198.0px;width:132.64999999999998px;height:0.9000000000000057px;background:#bcd7f3;"></div>
<div class="t" style="left:623.1px;top:189.10px;font-size:6.6px;color:#333;">100153</div>
<div class="t" style="left:576.6px;top:201.65px;font-size:6.6px;color:#444;">Telefon 1</div>
<div style="position:absolute;left:621.1px;top:200.9px;width:85.39999999999998px;height:10.699999999999989px;background:#ececec;border-top:0.6px solid #d8d8d8;box-sizing:border-box;"></div>
<div style="position:absolute;left:621.1px;top:210.7px;width:85.39999999999998px;height:0.9000000000000057px;background:#bcd7f3;"></div>
<div class="t" style="left:623.1px;top:201.80px;font-size:6.6px;color:#333;">+49 201 21770</div>
<div class="t" style="left:576.6px;top:214.45px;font-size:6.6px;color:#444;">Telefon 2</div>
<div style="position:absolute;left:621.1px;top:213.7px;width:85.39999999999998px;height:10.700000000000017px;background:#ececec;border-top:0.6px solid #d8d8d8;box-sizing:border-box;"></div>
<div style="position:absolute;left:621.1px;top:223.5px;width:85.39999999999998px;height:0.9000000000000057px;background:#bcd7f3;"></div>
<div class="t" style="left:623.1px;top:214.60px;font-size:6.6px;color:#333;">+49 201 21771</div>
<div class="t" style="left:576.6px;top:227.65px;font-size:6.6px;color:#444;">E-Mail Adresse</div>
<div style="position:absolute;left:621.1px;top:226.8px;width:132.64999999999998px;height:10.799999999999983px;background:#ececec;border-top:0.6px solid #d8d8d8;box-sizing:border-box;"></div>
<div style="position:absolute;left:621.1px;top:236.7px;width:132.64999999999998px;height:0.9000000000000057px;background:#bcd7f3;"></div>
<div class="t" style="left:623.1px;top:227.75px;font-size:6.6px;color:#333;">info@aundm.de</div>
<div class="t" style="left:755.4px;top:188.95px;font-size:6.6px;color:#444;">PLZ/Ort</div>
<div style="position:absolute;left:784px;top:188.2px;width:45px;height:10.700000000000017px;background:#ececec;border-top:0.6px solid #d8d8d8;box-sizing:border-box;"></div>
<div style="position:absolute;left:784px;top:198.0px;width:45px;height:0.9000000000000057px;background:#bcd7f3;"></div>
<div class="t" style="left:786px;top:189.10px;font-size:6.6px;color:#333;">45001</div>
<div style="position:absolute;left:840.2px;top:188.2px;width:167.39999999999998px;height:10.700000000000017px;background:#ececec;border-top:0.6px solid #d8d8d8;box-sizing:border-box;"></div>
<div style="position:absolute;left:840.2px;top:198.0px;width:167.39999999999998px;height:0.9000000000000057px;background:#bcd7f3;"></div>
<div class="t" style="left:842.2px;top:189.10px;font-size:6.6px;color:#333;">Essen</div>
<div class="t" style="left:755.4px;top:201.65px;font-size:6.6px;color:#444;">Fax</div>
<div style="position:absolute;left:784px;top:200.9px;width:95.79999999999995px;height:10.699999999999989px;background:#ececec;border-top:0.6px solid #d8d8d8;box-sizing:border-box;"></div>
<div style="position:absolute;left:784px;top:210.7px;width:95.79999999999995px;height:0.9000000000000057px;background:#bcd7f3;"></div>
<div class="t" style="left:786px;top:201.80px;font-size:6.6px;color:#333;">+49 201 2177191</div>
<div class="t" style="left:755.4px;top:227.65px;font-size:6.6px;color:#444;">Webseite</div>
<div style="position:absolute;left:784px;top:226.8px;width:202.39999999999998px;height:10.799999999999983px;background:#ececec;border-top:0.6px solid #d8d8d8;box-sizing:border-box;"></div>
<div style="position:absolute;left:784px;top:236.7px;width:202.39999999999998px;height:0.9000000000000057px;background:#bcd7f3;"></div>
<div class="t" style="left:786px;top:227.75px;font-size:6.6px;color:#333;">www.aundm.de</div>
<div style="position:absolute;left:166.4px;top:247px;width:843.1px;height:197.7px;background:#fff;box-shadow:0.4px 0.7px 1px rgba(0,0,0,0.24),0 3px 5px rgba(0,0,0,0.045);border-radius:1.5px;"></div>
<div style="position:absolute;left:198.3px;top:250px;width:270.2px;height:11.600000000000023px;background:#fff;box-shadow:0.5px 0.5px 1px rgba(0,0,0,0.22);"></div>
<div class="t" style="left:200.3px;top:250.95px;font-size:6.6px;color:#333;">Ansprechpartner</div>
<div style="position:absolute;left:254.35px;top:250px;width:0.5px;height:11.600000000000023px;background:#e0e0e0;"></div>
<div class="t" style="left:256.6px;top:250.95px;font-size:6.6px;color:#333;">Hinweise/Position</div>
<div style="position:absolute;left:313.65px;top:250px;width:0.5px;height:11.600000000000023px;background:#e0e0e0;"></div>
<div class="t" style="left:315.9px;top:250.95px;font-size:6.6px;color:#333;">Stammdaten 1</div>
<div style="position:absolute;left:363.75px;top:250px;width:0.5px;height:11.600000000000023px;background:#e0e0e0;"></div>
<div class="t" style="left:366px;top:250.95px;font-size:6.6px;color:#333;">Stammdaten 2</div>
<div style="position:absolute;left:413.35px;top:250px;width:0.5px;height:11.600000000000023px;background:#e0e0e0;"></div>
<div class="t" style="left:415.6px;top:250.95px;font-size:6.6px;color:#333;">Bank</div>
<div style="position:absolute;left:435.35px;top:250px;width:0.5px;height:11.600000000000023px;background:#e0e0e0;"></div>
<div class="t" style="left:437.6px;top:250.95px;font-size:6.6px;color:#333;">Vertreter</div>
<div style="position:absolute;left:468.25px;top:250px;width:0.5px;height:11.600000000000023px;background:#e0e0e0;"></div>
<div style="position:absolute;left:198.3px;top:260.8px;width:56.19999999999999px;height:1.0px;background:#4a90e2;"></div>
<div style="position:absolute;left:172px;top:268px;width:831.8px;height:170.3px;background:#fff;box-shadow:0.4px 0.7px 1px rgba(0,0,0,0.24),0 3px 5px rgba(0,0,0,0.045);border-radius:1.5px;"></div>
<div class="t" style="left:173.8px;top:270.25px;font-size:6.6px;color:#222;font-weight:bold;">Ansprechpartner</div>
<div style="position:absolute;left:174.2px;top:281.3px;width:826.5999999999999px;height:11.300000000000011px;background:#f3f3f3;border-top:0.5px solid #e0e0e0;box-sizing:border-box;"></div>
<div class="t" style="left:176.4px;top:282.35px;font-size:6.2px;color:#222;font-weight:bold;">Nr.</div>
<div class="t" style="left:202.6px;top:282.35px;font-size:6.2px;color:#222;font-weight:bold;">Vorname</div>
<div class="t" style="left:328px;top:282.35px;font-size:6.2px;color:#222;font-weight:bold;">Name</div>
<div class="t" style="left:452.9px;top:282.35px;font-size:6.2px;color:#222;font-weight:bold;">Geburtsdatum</div>
<div class="t" style="left:505.5px;top:282.35px;font-size:6.2px;color:#222;font-weight:bold;">Telefondurchwahl</div>
<div class="t" style="left:631.4px;top:282.35px;font-size:6.2px;color:#222;font-weight:bold;">Mobil</div>
<div class="t" style="left:755.2px;top:282.35px;font-size:6.2px;color:#222;font-weight:bold;">E-Mail Adresse</div>
<div style="position:absolute;left:200.39999999999998px;top:283px;width:0.6000000000000227px;height:8px;background:#dcdcdc;"></div>
<div style="position:absolute;left:325.9px;top:283px;width:0.6000000000000227px;height:8px;background:#dcdcdc;"></div>
<div style="position:absolute;left:450.8px;top:283px;width:0.6000000000000227px;height:8px;background:#dcdcdc;"></div>
<div style="position:absolute;left:503.59999999999997px;top:283px;width:0.6000000000000227px;height:8px;background:#dcdcdc;"></div>
<div style="position:absolute;left:629.5px;top:283px;width:0.599999999999909px;height:8px;background:#dcdcdc;"></div>
<div style="position:absolute;left:753.3000000000001px;top:283px;width:0.599999999999909px;height:8px;background:#dcdcdc;"></div>
<div class="t" style="left:-101.10px;width:300px;text-align:right;top:294.00px;font-size:6.6px;color:#333;">1</div>
<div class="t" style="left:202.6px;top:294.00px;font-size:6.6px;color:#333;">Otto</div>
<div class="t" style="left:328px;top:294.00px;font-size:6.6px;color:#333;">Liebich</div>
<div class="t" style="left:452.9px;top:294.00px;font-size:6.6px;color:#333;">08/08/1990</div>
<div class="t" style="left:505.5px;top:294.00px;font-size:6.6px;color:#333;">021122222212</div>
<div class="t" style="left:755.2px;top:294.00px;font-size:6.6px;color:#333;">otto.liebich@aundm.de</div>
<div style="position:absolute;left:174.2px;top:303.65000000000003px;width:826.5999999999999px;height:11.050000000000011px;background:#ececec;"></div>
<div class="t" style="left:-101.10px;width:300px;text-align:right;top:305.05px;font-size:6.6px;color:#333;">2</div>
<div class="t" style="left:202.6px;top:305.05px;font-size:6.6px;color:#333;">Uwe</div>
<div class="t" style="left:328px;top:305.05px;font-size:6.6px;color:#333;">Meyer</div>
<div class="t" style="left:505.5px;top:305.05px;font-size:6.6px;color:#333;">021122222215</div>
<div class="t" style="left:755.2px;top:305.05px;font-size:6.6px;color:#333;">uwe.meyer@aundm.de</div>
<div class="t" style="left:-101.10px;width:300px;text-align:right;top:316.10px;font-size:6.6px;color:#333;">3</div>
<div class="t" style="left:202.6px;top:316.10px;font-size:6.6px;color:#333;">Gerhard</div>
<div class="t" style="left:328px;top:316.10px;font-size:6.6px;color:#333;">Müller</div>
<div class="t" style="left:452.9px;top:316.10px;font-size:6.6px;color:#333;">01/01/1990</div>
<div class="t" style="left:505.5px;top:316.10px;font-size:6.6px;color:#333;">021122222227</div>
<div class="t" style="left:631.4px;top:316.10px;font-size:6.6px;color:#333;">0171 6800000</div>
<div class="t" style="left:755.2px;top:316.10px;font-size:6.6px;color:#333;">gerhard.muellerr@aundm.de</div>
<div style="position:absolute;left:174.2px;top:325.75px;width:826.5999999999999px;height:11.050000000000011px;background:#ececec;"></div>
<div class="t" style="left:-101.10px;width:300px;text-align:right;top:327.15px;font-size:6.6px;color:#333;">4</div>
<div class="t" style="left:202.6px;top:327.15px;font-size:6.6px;color:#333;">Elke</div>
<div class="t" style="left:328px;top:327.15px;font-size:6.6px;color:#333;">Amann</div>
<div class="t" style="left:452.9px;top:327.15px;font-size:6.6px;color:#333;">10/20/1989</div>
<div class="t" style="left:505.5px;top:327.15px;font-size:6.6px;color:#333;">021122222218</div>
<div class="t" style="left:755.2px;top:327.15px;font-size:6.6px;color:#333;">elke.amann@aundm.de</div>
<div style="position:absolute;left:174px;top:436px;width:826.8px;height:1.1999999999999886px;background:#cfe1f5;"></div>
<div style="position:absolute;left:165.6px;top:451.9px;width:844.4px;height:26.5px;background:#fff;box-shadow:0.4px 0.7px 1px rgba(0,0,0,0.24),0 3px 5px rgba(0,0,0,0.045);border-radius:1.5px;"></div>
<div class="t" style="left:167.2px;top:453.85px;font-size:6.6px;color:#222;font-weight:bold;">Änderung</div>
<div class="t" style="left:167.2px;top:465.55px;font-size:6.6px;color:#444;">Loeschvermerk</div>
<div style="position:absolute;left:215.6px;top:466.6px;width:6.400000000000006px;height:6.399999999999977px;background:#fff;border:0.6px solid #aaa;box-sizing:border-box;"></div>
<div class="t" style="left:230.9px;top:465.55px;font-size:6.6px;color:#444;">Anlagedatum</div>
<div style="position:absolute;left:272.1px;top:464.8px;width:52.799999999999955px;height:10.800000000000011px;background:#ececec;border-top:0.6px solid #d8d8d8;box-sizing:border-box;"></div>
<div style="position:absolute;left:272.1px;top:474.70000000000005px;width:52.799999999999955px;height:0.8999999999999773px;background:#bcd7f3;"></div>
<div class="t" style="left:274.1px;top:465.75px;font-size:6.6px;color:#333;">08.12.2005</div>
<div class="t" style="left:326.6px;top:465.55px;font-size:6.6px;color:#444;">Datum lt. Veränderung</div>
<div style="position:absolute;left:395.2px;top:464.8px;width:54.400000000000034px;height:10.800000000000011px;background:#ececec;border-top:0.6px solid #d8d8d8;box-sizing:border-box;"></div>
<div style="position:absolute;left:395.2px;top:474.70000000000005px;width:54.400000000000034px;height:0.8999999999999773px;background:#bcd7f3;"></div>
<div class="t" style="left:397.2px;top:465.75px;font-size:6.6px;color:#333;">17.12.2018</div>
<svg style="position:absolute;left:317px;top:467px" width="6" height="6" viewBox="0 0 6 6"><rect x="0.5" y="0.8" width="5" height="4.7" fill="none" stroke="#333" stroke-width="0.8"/><rect x="0.5" y="0.8" width="5" height="1.4" fill="#333"/></svg>
<svg style="position:absolute;left:442px;top:467px" width="6" height="6" viewBox="0 0 6 6"><rect x="0.5" y="0.8" width="5" height="4.7" fill="none" stroke="#333" stroke-width="0.8"/><rect x="0.5" y="0.8" width="5" height="1.4" fill="#333"/></svg>
<div class="t" style="left:451px;top:465.55px;font-size:6.6px;color:#444;">Sachbearbeiter</div>
<div style="position:absolute;left:497.1px;top:464.8px;width:52.69999999999993px;height:10.800000000000011px;background:#ececec;border-top:0.6px solid #d8d8d8;box-sizing:border-box;"></div>
<div style="position:absolute;left:497.1px;top:474.70000000000005px;width:52.69999999999993px;height:0.8999999999999773px;background:#bcd7f3;"></div>
<div class="t" style="left:499.1px;top:465.75px;font-size:6.6px;color:#333;">gerhard</div>
<div style="position:absolute;left:583.5px;top:479.5px;width:6.0px;height:2.5px;background:#f0f0f0;border-radius:1px;"></div>
<div style="position:absolute;left:584.5px;top:480.3px;width:4.0px;height:0.39999999999997726px;background:#c8c8c8;"></div>
<div style="position:absolute;left:584.5px;top:481px;width:4.0px;height:0.39999999999997726px;background:#c8c8c8;"></div>
<div style="position:absolute;left:165.8px;top:484px;width:844.5999999999999px;height:168.29999999999995px;background:#fff;box-shadow:0.4px 0.7px 1px rgba(0,0,0,0.24),0 3px 5px rgba(0,0,0,0.045);border-radius:1.5px;"></div>
<div class="t" style="left:167.4px;top:485.95px;font-size:6.6px;color:#222;font-weight:bold;">Auswahl</div>
<div style="position:absolute;left:167.5px;top:497.1px;width:840.1px;height:11.799999999999955px;background:#f3f3f3;border-top:0.5px solid #e0e0e0;box-sizing:border-box;"></div>
<div class="t" style="left:169.8px;top:497.95px;font-size:6.2px;color:#222;font-weight:bold;">Konto-Nummer</div>
<div class="t" style="left:218.8px;top:497.95px;font-size:6.2px;color:#222;font-weight:bold;">Art</div>
<div class="t" style="left:263.9px;top:497.95px;font-size:6.2px;color:#222;font-weight:bold;">Kundennummer</div>
<div class="t" style="left:334.6px;top:497.95px;font-size:6.2px;color:#222;font-weight:bold;">Sortierung</div>
<div class="t" style="left:366.7px;top:497.95px;font-size:6.2px;color:#222;font-weight:bold;">Name 1</div>
<div class="t" style="left:528.1px;top:497.95px;font-size:6.2px;color:#222;font-weight:bold;">Straße</div>
<div class="t" style="left:690.4px;top:497.95px;font-size:6.2px;color:#222;font-weight:bold;">AKZ</div>
<div class="t" style="left:710.8px;top:497.95px;font-size:6.2px;color:#222;font-weight:bold;">PLZ</div>
<div class="t" style="left:755.9px;top:497.95px;font-size:6.2px;color:#222;font-weight:bold;">Ort</div>
<div class="t" style="left:918.1px;top:497.95px;font-size:6.2px;color:#222;font-weight:bold;">Land</div>
<div class="t" style="left:938.6px;top:497.95px;font-size:6.2px;color:#222;font-weight:bold;">Postfach-PLZ</div>
<div class="t" style="left:983.6px;top:497.95px;font-size:6.2px;color:#222;font-weight:bold;">Postfach</div>
<div style="position:absolute;left:216.89999999999998px;top:499px;width:0.6000000000000227px;height:8px;background:#dcdcdc;"></div>
<div style="position:absolute;left:262.0px;top:499px;width:0.6000000000000227px;height:8px;background:#dcdcdc;"></div>
<div style="position:absolute;left:332.09999999999997px;top:499px;width:0.6000000000000227px;height:8px;background:#dcdcdc;"></div>
<div style="position:absolute;left:364.8px;top:499px;width:0.6000000000000227px;height:8px;background:#dcdcdc;"></div>
<div style="position:absolute;left:526.3000000000001px;top:499px;width:0.599999999999909px;height:8px;background:#dcdcdc;"></div>
<div style="position:absolute;left:688.5px;top:499px;width:0.599999999999909px;height:8px;background:#dcdcdc;"></div>
<div style="position:absolute;left:708.9000000000001px;top:499px;width:0.599999999999909px;height:8px;background:#dcdcdc;"></div>
<div style="position:absolute;left:754.0px;top:499px;width:0.599999999999909px;height:8px;background:#dcdcdc;"></div>
<div style="position:absolute;left:916.2px;top:499px;width:0.599999999999909px;height:8px;background:#dcdcdc;"></div>
<div style="position:absolute;left:936.7px;top:499px;width:0.599999999999909px;height:8px;background:#dcdcdc;"></div>
<div style="position:absolute;left:981.7px;top:499px;width:0.599999999999909px;height:8px;background:#dcdcdc;"></div>
<div style="position:absolute;left:167.5px;top:508.9px;width:840.1px;height:141px;overflow:hidden;">
<div style="position:absolute;left:0;top:11.75px;width:840.1px;height:11.65px;background:#ececec;"></div>
<div style="position:absolute;left:0;top:35.05px;width:840.1px;height:11.65px;background:#ececec;"></div>
<div style="position:absolute;left:0;top:58.35px;width:840.1px;height:11.65px;background:#ececec;"></div>
<div style="position:absolute;left:0;top:81.65px;width:840.1px;height:11.65px;background:#ececec;"></div>
<div style="position:absolute;left:0;top:104.95px;width:840.1px;height:11.65px;background:#ececec;"></div>
<div style="position:absolute;left:0;top:128.25px;width:840.1px;height:11.65px;background:#ececec;"></div>
</div>
<div style="position:absolute;left:0;top:0;width:1007.6px;height:665px;overflow:hidden;">
<div class="t" style="left:-84.90px;width:300px;text-align:right;top:510.55px;font-size:6.6px;color:#333;">730080</div>
<div class="t" style="left:220.8px;top:510.55px;font-size:6.6px;color:#333;">Kreditor</div>
<div class="t" style="left:263.9px;top:510.55px;font-size:6.6px;color:#333;">692015</div>
<div class="t" style="left:334.6px;top:511.30px;font-size:6.5px;color:#3a3a3a;font-family:'Liberation Mono',monospace;-webkit-text-stroke:0.05px;">A&amp;M E</div>
<div class="t" style="left:366.7px;top:510.55px;font-size:6.6px;color:#333;">ASS Elektrowerkzeuge GmbH</div>
<div class="t" style="left:528.1px;top:510.55px;font-size:6.6px;color:#333;">Langemarckstr. 36</div>
<div class="t" style="left:690.6px;top:510.55px;font-size:6.6px;color:#333;">D</div>
<div class="t" style="left:710.8px;top:510.55px;font-size:6.6px;color:#333;">45141</div>
<div class="t" style="left:755.9px;top:510.55px;font-size:6.6px;color:#333;">Essen</div>
<div class="t" style="left:918.1px;top:510.55px;font-size:6.6px;color:#333;">DE</div>
<div class="t" style="left:938.6px;top:510.55px;font-size:6.6px;color:#333;">45001</div>
<div class="t" style="left:983.6px;top:510.55px;font-size:6.6px;color:#333;">Essen</div>
<div class="t" style="left:-84.90px;width:300px;text-align:right;top:522.20px;font-size:6.6px;color:#333;">710050</div>
<div class="t" style="left:220.8px;top:522.20px;font-size:6.6px;color:#333;">Kreditor</div>
<div class="t" style="left:334.6px;top:522.95px;font-size:6.5px;color:#3a3a3a;font-family:'Liberation Mono',monospace;-webkit-text-stroke:0.05px;">A+S</div>
<div class="t" style="left:366.7px;top:522.20px;font-size:6.6px;color:#333;">A+S Steuerungstechnik GbR</div>
<div class="t" style="left:528.1px;top:522.20px;font-size:6.6px;color:#333;">Morlinge 4711</div>
<div class="t" style="left:690.6px;top:522.20px;font-size:6.6px;color:#333;">D</div>
<div class="t" style="left:710.8px;top:522.20px;font-size:6.6px;color:#333;">33151</div>
<div class="t" style="left:755.9px;top:522.20px;font-size:6.6px;color:#333;">Warmsen</div>
<div class="t" style="left:918.1px;top:522.20px;font-size:6.6px;color:#333;">DE</div>
<div class="t" style="left:-84.90px;width:300px;text-align:right;top:533.85px;font-size:6.6px;color:#333;">731830</div>
<div class="t" style="left:220.8px;top:533.85px;font-size:6.6px;color:#333;">Kreditor</div>
<div class="t" style="left:263.9px;top:533.85px;font-size:6.6px;color:#333;">6398</div>
<div class="t" style="left:334.6px;top:534.60px;font-size:6.5px;color:#3a3a3a;font-family:'Liberation Mono',monospace;-webkit-text-stroke:0.05px;">AAF</div>
<div class="t" style="left:366.7px;top:533.85px;font-size:6.6px;color:#333;">CCH-Lufttechnik GmbH</div>
<div class="t" style="left:528.1px;top:533.85px;font-size:6.6px;color:#333;">Justus-von-Liebig-Straße 11</div>
<div class="t" style="left:690.6px;top:533.85px;font-size:6.6px;color:#333;">D</div>
<div class="t" style="left:710.8px;top:533.85px;font-size:6.6px;color:#333;">63128</div>
<div class="t" style="left:755.9px;top:533.85px;font-size:6.6px;color:#333;">Dietzenbach</div>
<div class="t" style="left:918.1px;top:533.85px;font-size:6.6px;color:#333;">DE</div>
<div class="t" style="left:938.6px;top:533.85px;font-size:6.6px;color:#333;">44316</div>
<div class="t" style="left:983.6px;top:533.85px;font-size:6.6px;color:#333;">Dortmund</div>
<div class="t" style="left:-84.90px;width:300px;text-align:right;top:545.50px;font-size:6.6px;color:#333;">720090</div>
<div class="t" style="left:220.8px;top:545.50px;font-size:6.6px;color:#333;">Kreditor</div>
<div class="t" style="left:263.9px;top:545.50px;font-size:6.6px;color:#333;">248965000</div>
<div class="t" style="left:334.6px;top:546.25px;font-size:6.5px;color:#3a3a3a;font-family:'Liberation Mono',monospace;-webkit-text-stroke:0.05px;">ABB</div>
<div class="t" style="left:366.7px;top:545.50px;font-size:6.6px;color:#333;">AKK Stolz-Kontakt GmbH</div>
<div class="t" style="left:528.1px;top:545.50px;font-size:6.6px;color:#333;">Hildesheimer Str. 24</div>
<div class="t" style="left:690.6px;top:545.50px;font-size:6.6px;color:#333;">D</div>
<div class="t" style="left:710.8px;top:545.50px;font-size:6.6px;color:#333;">30169</div>
<div class="t" style="left:755.9px;top:545.50px;font-size:6.6px;color:#333;">Hannover</div>
<div class="t" style="left:918.1px;top:545.50px;font-size:6.6px;color:#333;">DE</div>
<div class="t" style="left:-84.90px;width:300px;text-align:right;top:557.15px;font-size:6.6px;color:#333;">710161</div>
<div class="t" style="left:220.8px;top:557.15px;font-size:6.6px;color:#333;">Kreditor</div>
<div class="t" style="left:334.6px;top:557.90px;font-size:6.5px;color:#3a3a3a;font-family:'Liberation Mono',monospace;-webkit-text-stroke:0.05px;">ABG-P</div>
<div class="t" style="left:366.7px;top:557.15px;font-size:6.6px;color:#333;">ABG-Pumpen Claus G.Knüppel</div>
<div class="t" style="left:528.1px;top:557.15px;font-size:6.6px;color:#333;">Dehnhaide 22b</div>
<div class="t" style="left:690.6px;top:557.15px;font-size:6.6px;color:#333;">D</div>
<div class="t" style="left:710.8px;top:557.15px;font-size:6.6px;color:#333;">20010</div>
<div class="t" style="left:755.9px;top:557.15px;font-size:6.6px;color:#333;">Hamburg 58</div>
<div class="t" style="left:918.1px;top:557.15px;font-size:6.6px;color:#333;">DE</div>
<div class="t" style="left:-84.90px;width:300px;text-align:right;top:568.80px;font-size:6.6px;color:#333;">131977</div>
<div class="t" style="left:220.8px;top:568.80px;font-size:6.6px;color:#333;">Debitor</div>
<div class="t" style="left:334.6px;top:569.55px;font-size:6.5px;color:#3a3a3a;font-family:'Liberation Mono',monospace;-webkit-text-stroke:0.05px;">ABRAH</div>
<div class="t" style="left:366.7px;top:568.80px;font-size:6.6px;color:#333;">Sieglinde Abraham</div>
<div class="t" style="left:528.1px;top:568.80px;font-size:6.6px;color:#333;">Pommernweg 157</div>
<div class="t" style="left:710.8px;top:568.80px;font-size:6.6px;color:#333;">39393</div>
<div class="t" style="left:755.9px;top:568.80px;font-size:6.6px;color:#333;">Hötensleben</div>
<div class="t" style="left:918.1px;top:568.80px;font-size:6.6px;color:#333;">DE</div>
<div class="t" style="left:-84.90px;width:300px;text-align:right;top:580.45px;font-size:6.6px;color:#333;">740020</div>
<div class="t" style="left:220.8px;top:580.45px;font-size:6.6px;color:#333;">Kreditor</div>
<div class="t" style="left:263.9px;top:580.45px;font-size:6.6px;color:#333;">123127</div>
<div class="t" style="left:334.6px;top:581.20px;font-size:6.5px;color:#3a3a3a;font-family:'Liberation Mono',monospace;-webkit-text-stroke:0.05px;">ABRAM</div>
<div class="t" style="left:366.7px;top:580.45px;font-size:6.6px;color:#333;">Abrahams Premium Stahl</div>
<div class="t" style="left:528.1px;top:580.45px;font-size:6.6px;color:#333;">Hannoversche Straße 33</div>
<div class="t" style="left:690.6px;top:580.45px;font-size:6.6px;color:#333;">D</div>
<div class="t" style="left:710.8px;top:580.45px;font-size:6.6px;color:#333;">49084</div>
<div class="t" style="left:755.9px;top:580.45px;font-size:6.6px;color:#333;">Osnabrück</div>
<div class="t" style="left:918.1px;top:580.45px;font-size:6.6px;color:#333;">DE</div>
<div class="t" style="left:-84.90px;width:300px;text-align:right;top:592.10px;font-size:6.6px;color:#333;">700010</div>
<div class="t" style="left:220.8px;top:592.10px;font-size:6.6px;color:#333;">Kreditor</div>
<div class="t" style="left:263.9px;top:592.10px;font-size:6.6px;color:#333;">421336</div>
<div class="t" style="left:334.6px;top:592.85px;font-size:6.5px;color:#3a3a3a;font-family:'Liberation Mono',monospace;-webkit-text-stroke:0.05px;">ACD M</div>
<div class="t" style="left:366.7px;top:592.10px;font-size:6.6px;color:#333;">ACC Metall-Center GmbH Hanau</div>
<div class="t" style="left:528.1px;top:592.10px;font-size:6.6px;color:#333;">Auf dem Dreieck 55</div>
<div class="t" style="left:690.6px;top:592.10px;font-size:6.6px;color:#333;">D</div>
<div class="t" style="left:710.8px;top:592.10px;font-size:6.6px;color:#333;">28197</div>
<div class="t" style="left:755.9px;top:592.10px;font-size:6.6px;color:#333;">Bremen</div>
<div class="t" style="left:918.1px;top:592.10px;font-size:6.6px;color:#333;">DE</div>
<div class="t" style="left:938.6px;top:592.10px;font-size:6.6px;color:#333;">28089</div>
<div class="t" style="left:983.6px;top:592.10px;font-size:6.6px;color:#333;">Bremen</div>
<div class="t" style="left:-84.90px;width:300px;text-align:right;top:603.75px;font-size:6.6px;color:#333;">131677</div>
<div class="t" style="left:220.8px;top:603.75px;font-size:6.6px;color:#333;">Debitor</div>
<div class="t" style="left:334.6px;top:604.50px;font-size:6.5px;color:#3a3a3a;font-family:'Liberation Mono',monospace;-webkit-text-stroke:0.05px;">ACHIL</div>
<div class="t" style="left:366.7px;top:603.75px;font-size:6.6px;color:#333;">Jan-Friedrich Achilles</div>
<div class="t" style="left:528.1px;top:603.75px;font-size:6.6px;color:#333;">Mittelweg 100</div>
<div class="t" style="left:710.8px;top:603.75px;font-size:6.6px;color:#333;">12487</div>
<div class="t" style="left:755.9px;top:603.75px;font-size:6.6px;color:#333;">Berlin</div>
<div class="t" style="left:918.1px;top:603.75px;font-size:6.6px;color:#333;">DE</div>
<div class="t" style="left:-84.90px;width:300px;text-align:right;top:615.40px;font-size:6.6px;color:#333;">730060</div>
<div class="t" style="left:220.8px;top:615.40px;font-size:6.6px;color:#333;">Kreditor</div>
<div class="t" style="left:334.6px;top:616.15px;font-size:6.5px;color:#3a3a3a;font-family:'Liberation Mono',monospace;-webkit-text-stroke:0.05px;">ACRYL</div>
<div class="t" style="left:366.7px;top:615.40px;font-size:6.6px;color:#333;">MYFACTORY KG</div>
<div class="t" style="left:528.1px;top:615.40px;font-size:6.6px;color:#333;">Borsigstr. 4</div>
<div class="t" style="left:690.6px;top:615.40px;font-size:6.6px;color:#333;">D</div>
<div class="t" style="left:710.8px;top:615.40px;font-size:6.6px;color:#333;">32369</div>
<div class="t" style="left:755.9px;top:615.40px;font-size:6.6px;color:#333;">Rahden</div>
<div class="t" style="left:918.1px;top:615.40px;font-size:6.6px;color:#333;">DE</div>
<div class="t" style="left:-84.90px;width:300px;text-align:right;top:627.05px;font-size:6.6px;color:#333;">710040</div>
<div class="t" style="left:220.8px;top:627.05px;font-size:6.6px;color:#333;">Kreditor</div>
<div class="t" style="left:263.9px;top:627.05px;font-size:6.6px;color:#333;">90009062</div>
<div class="t" style="left:334.6px;top:627.80px;font-size:6.5px;color:#3a3a3a;font-family:'Liberation Mono',monospace;-webkit-text-stroke:0.05px;">AD CO</div>
<div class="t" style="left:366.7px;top:627.05px;font-size:6.6px;color:#333;">ADS Computertechnik GmbH</div>
<div class="t" style="left:528.1px;top:627.05px;font-size:6.6px;color:#333;">Lindemanstr. 223</div>
<div class="t" style="left:690.6px;top:627.05px;font-size:6.6px;color:#333;">D</div>
<div class="t" style="left:710.8px;top:627.05px;font-size:6.6px;color:#333;">28213</div>
<div class="t" style="left:755.9px;top:627.05px;font-size:6.6px;color:#333;">Bremen</div>
<div class="t" style="left:918.1px;top:627.05px;font-size:6.6px;color:#333;">DE</div>
<div class="t" style="left:-84.90px;width:300px;text-align:right;top:638.70px;font-size:6.6px;color:#333;">133001</div>
<div class="t" style="left:220.8px;top:638.70px;font-size:6.6px;color:#333;">Debitor</div>
<div class="t" style="left:334.6px;top:639.45px;font-size:6.5px;color:#3a3a3a;font-family:'Liberation Mono',monospace;-webkit-text-stroke:0.05px;">ADAMI</div>
<div class="t" style="left:366.7px;top:638.70px;font-size:6.6px;color:#333;">Klaus-Gerhard Adamietz</div>
<div class="t" style="left:528.1px;top:638.70px;font-size:6.6px;color:#333;">Hossoppsfeld 299</div>
<div class="t" style="left:710.8px;top:638.70px;font-size:6.6px;color:#333;">41515</div>
<div class="t" style="left:755.9px;top:638.70px;font-size:6.6px;color:#333;">Grevenbroich</div>
<div class="t" style="left:918.1px;top:638.70px;font-size:6.6px;color:#333;">DE</div>
</div>
<div style="position:absolute;left:167.5px;top:649.2px;width:840.1px;height:2.0px;background:#cfe1f5;"></div>
</body></html>
